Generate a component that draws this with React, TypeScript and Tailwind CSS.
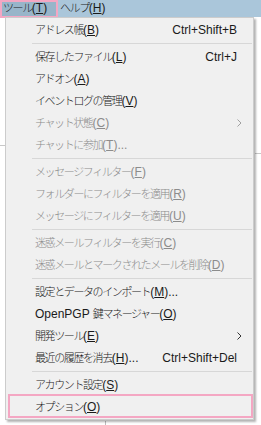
import React from "react";

type Item =
  | { sep: true }
  | {
      sep?: false;
      label: string;
      key: string;
      tail?: string;
      shortcut?: string;
      disabled?: boolean;
      submenu?: boolean;
    };

const ITEMS: Item[] = [
  { label: "アドレス帳", key: "B", shortcut: "Ctrl+Shift+B" },
  { sep: true },
  { label: "保存したファイル", key: "L", shortcut: "Ctrl+J" },
  { label: "アドオン", key: "A" },
  { label: "イベントログの管理", key: "V" },
  { label: "チャット状態", key: "C", disabled: true, submenu: true },
  { label: "チャットに参加", key: "T", tail: "...", disabled: true },
  { sep: true },
  { label: "メッセージフィルター", key: "F", disabled: true },
  { label: "フォルダーにフィルターを適用", key: "R", disabled: true },
  { label: "メッセージにフィルターを適用", key: "U", disabled: true },
  { sep: true },
  { label: "迷惑メールフィルターを実行", key: "C", disabled: true },
  { label: "迷惑メールとマークされたメールを削除", key: "D", disabled: true },
  { sep: true },
  { label: "設定とデータのインポート", key: "M", tail: "..." },
  { label: "OpenPGP 鍵マネージャー", key: "O" },
  { label: "開発ツール", key: "E", submenu: true },
  { label: "最近の履歴を消去", key: "H", tail: "...", shortcut: "Ctrl+Shift+Del" },
  { sep: true },
  { label: "アカウント設定", key: "S" },
  { label: "オプション", key: "O" },
];

const font = "font-['Liberation_Sans','Noto_Sans_CJK_JP',sans-serif]";

// ASCII runs keep the latin font at normal spacing, Japanese runs are squeezed
function Label({ text }: { text: string }) {
  const parts = text.split(/([\x00-\x7F]+)/).filter(Boolean);
  return (
    <>
      {parts.map((p, i) =>
        /^[\x00-\x7F]+$/.test(p) ? (
          <span key={i}>{p}</span>
        ) : (
          <span key={i} className="text-[11px] font-light tracking-[-1.4px]">
            {p}
          </span>
        )
      )}
    </>
  );
}

function Chevron({ disabled }: { disabled?: boolean }) {
  return (
    <svg width="5" height="8" viewBox="0 0 5 8" className="ml-auto mr-[11px]">
      <path
        d="M0.5 0.5 L4 4 L0.5 7.5"
        fill="none"
        stroke={disabled ? "#a0a0a0" : "#333333"}
        strokeWidth="1"
      />
    </svg>
  );
}

export default function App() {
  return (
    <div className={`relative w-[261px] h-[425px] overflow-hidden bg-white ${font} text-[12px]`}>
      {/* menu bar */}
      <div className="flex h-[17px] bg-[#aac6da] items-center text-[#1a1a1a]">
        <div className="h-full w-[56px] bg-[#98b5c9] pl-[3px] leading-[17px] whitespace-nowrap">
          <Label text="ツール" />(<span className="underline">T</span>)
        </div>
        <div className="pl-[4px] leading-[17px] whitespace-nowrap">
          <Label text="ヘルプ" />(<span className="underline">H</span>)
        </div>
      </div>
      <div className="absolute left-0 top-0 w-[58px] h-[18px] border-2 border-[#f4a7c3]" />

      {/* background window bits */}
      <div className="absolute left-0 top-[145px] w-[5px] h-px bg-[#c8c8c8]" />
      <div className="absolute right-0 top-[153px] w-[6px] h-px bg-[#c8c8c8]" />
      <div className="absolute left-[105px] top-[421px] w-px h-[4px] bg-[#bdbdbd]" />

      {/* dropdown */}
      <div className="absolute left-[5px] top-[17px] w-[249px] border border-[#cccccc] bg-[#f0f0f0] pt-[1px] pb-[1px] shadow-[2px_2px_2px_rgba(0,0,0,0.3)]">
        {ITEMS.map((it, i) =>
          it.sep ? (
            <div key={i} className="h-[5px] flex items-center pl-[26px] pr-[1px]">
              <div className="h-px w-full bg-[#d7d7d7]" />
            </div>
          ) : (
            <div
              key={i}
              className={`h-[22px] flex items-center pl-[29px] ${
                it.disabled ? "text-[#8c8c8c]" : "text-[#1a1a1a]"
              }`}
            >
              <span className="whitespace-nowrap">
                <Label text={it.label} />(<span className="underline">{it.key}</span>){it.tail}
              </span>
              {it.shortcut && (
                <span className="ml-auto pr-[16px] whitespace-nowrap">{it.shortcut}</span>
              )}
              {it.submenu && <Chevron disabled={it.disabled} />}
            </div>
          )
        )}
      </div>
      <div className="absolute left-[8px] top-[394px] w-[245px] h-[24px] border-2 border-[#f4a7c3]" />
    </div>
  );
}
